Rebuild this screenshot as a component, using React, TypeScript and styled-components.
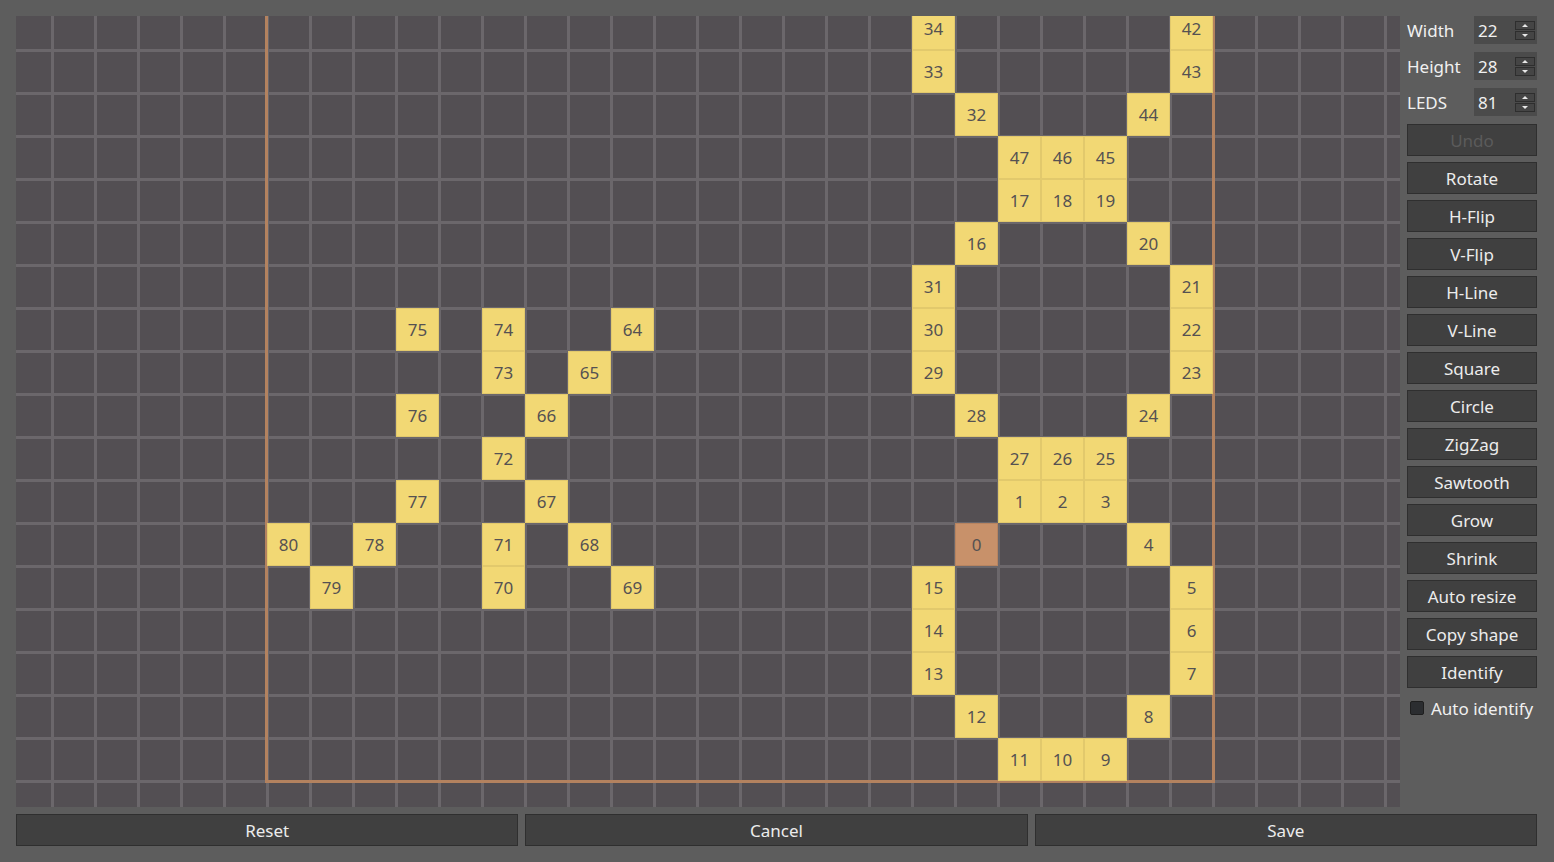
import styled, { createGlobalStyle } from 'styled-components'

const GlobalStyle = createGlobalStyle`
  html, body {
    margin: 0;
    padding: 0;
    background: #5d5d5d;
    font-family: "Noto Sans", "DejaVu Sans", sans-serif;
  }
  * {
    box-sizing: border-box;
  }
`

const CELL = 43
const COLS = 22
const ROWS = 28
const HIDDEN_ROWS = 10

// [led index, column, visible row]
const leds: [number, number, number][] = [
  [34, 15, 0], [42, 21, 0],
  [33, 15, 1], [43, 21, 1],
  [32, 16, 2], [44, 20, 2],
  [47, 17, 3], [46, 18, 3], [45, 19, 3],
  [17, 17, 4], [18, 18, 4], [19, 19, 4],
  [16, 16, 5], [20, 20, 5],
  [31, 15, 6], [21, 21, 6],
  [75, 3, 7], [74, 5, 7], [64, 8, 7], [30, 15, 7], [22, 21, 7],
  [73, 5, 8], [65, 7, 8], [29, 15, 8], [23, 21, 8],
  [76, 3, 9], [66, 6, 9], [28, 16, 9], [24, 20, 9],
  [72, 5, 10], [27, 17, 10], [26, 18, 10], [25, 19, 10],
  [77, 3, 11], [67, 6, 11], [1, 17, 11], [2, 18, 11], [3, 19, 11],
  [80, 0, 12], [78, 2, 12], [71, 5, 12], [68, 7, 12], [0, 16, 12], [4, 20, 12],
  [79, 1, 13], [70, 5, 13], [69, 8, 13], [15, 15, 13], [5, 21, 13],
  [14, 15, 14], [6, 21, 14],
  [13, 15, 15], [7, 21, 15],
  [12, 16, 16], [8, 20, 16],
  [11, 17, 17], [10, 18, 17], [9, 19, 17]
]

const tools = [
  'Rotate', 'H-Flip', 'V-Flip', 'H-Line', 'V-Line', 'Square', 'Circle',
  'ZigZag', 'Sawtooth', 'Grow', 'Shrink', 'Auto resize', 'Copy shape', 'Identify'
]

const Page = styled.div`
  width: 1554px;
  height: 862px;
  padding: 16px 17px 16px 16px;
  display: flex;
  flex-direction: column;
  gap: 7px;
`

const Main = styled.div`
  display: flex;
  gap: 7px;
  height: 791px;
`

const Canvas = styled.div`
  width: 1384px;
  height: 791px;
  overflow: hidden;
  background-color: #534f53;
  background-image:
    linear-gradient(to right, transparent 20px, #6b676b 20px, #6b676b 23px, transparent 23px),
    linear-gradient(to bottom, transparent 20px, #6b676b 20px, #6b676b 23px, transparent 23px);
  background-size: ${CELL}px ${CELL}px;
  background-position: 15px 0, 0 13px;
`

const Board = styled.div`
  position: relative;
  margin-left: 251px;
  margin-top: ${-9 - HIDDEN_ROWS * CELL}px;
  width: ${COLS * CELL}px;
  height: ${ROWS * CELL}px;
  display: grid;
  grid-template-columns: repeat(${COLS}, ${CELL}px);
  grid-template-rows: repeat(${ROWS}, ${CELL}px);

  &::before {
    content: '';
    position: absolute;
    left: -2px;
    top: -2px;
    right: -2px;
    bottom: -2px;
    border: 3px solid #b3825f;
  }
`

const Led = styled.div<{ $col: number; $row: number; $first: boolean }>`
  position: relative;
  grid-column: ${p => p.$col + 1};
  grid-row: ${p => p.$row + 1};
  background: ${p => (p.$first ? '#c8916a' : '#f2d874')};
  box-shadow: inset 0 0 0 1px ${p => (p.$first ? '#b88460' : '#e2c96c')};
  color: #555152;
  font-size: 17px;
  display: flex;
  align-items: center;
  justify-content: center;
`

const Panel = styled.div`
  width: 130px;
  display: flex;
  flex-direction: column;
`

const FieldRow = styled.div`
  display: flex;
  align-items: center;
  justify-content: space-between;
  height: 28px;
  margin-bottom: 8px;
  color: #f0f0f0;
  font-size: 17px;
`

const SpinBox = styled.div`
  width: 63px;
  height: 28px;
  background: #4b4b4b;
  display: flex;
  align-items: center;
  justify-content: space-between;
  padding: 0 2px 0 4px;
  color: #f0f0f0;
  font-size: 17px;
`

const SpinButtons = styled.div`
  display: flex;
  flex-direction: column;
  gap: 1px;
`

const SpinButton = styled.div`
  width: 20px;
  height: 9px;
  background: #454545;
  border: 1px solid #2e2e2e;
  display: flex;
  align-items: center;
  justify-content: center;
`

const Arrow = styled.div<{ $up: boolean }>`
  width: 0;
  height: 0;
  border-left: 3px solid transparent;
  border-right: 3px solid transparent;
  ${p => (p.$up ? 'border-bottom: 3px solid #e8e8e8;' : 'border-top: 3px solid #e8e8e8;')}
`

const ButtonList = styled.div`
  display: flex;
  flex-direction: column;
  gap: 6px;
`

const Button = styled.button`
  height: 32px;
  width: 100%;
  background: #404040;
  border: 1px solid #2f2f2f;
  border-radius: 0;
  color: #ececec;
  font-family: "Noto Sans", "DejaVu Sans", sans-serif;
  font-size: 17px;
  padding: 0;

  &:disabled {
    color: #5b5b5b;
  }
`

const CheckRow = styled.label`
  display: flex;
  align-items: center;
  gap: 7px;
  margin-top: 6px;
  height: 28px;
  padding-left: 3px;
  color: #f0f0f0;
  font-size: 17px;
`

const CheckBox = styled.span`
  width: 14px;
  height: 14px;
  border-radius: 2px;
  background: #2b2d30;
  border: 1px solid #1e1e1e;
`

const BottomBar = styled.div`
  display: flex;
  gap: 7px;
`

const BottomButton = styled(Button)`
  flex: 1;
`

function Spin ({ label, value }: { label: string; value: number }) {
  return (
    <FieldRow>
      {label}
      <SpinBox>
        {value}
        <SpinButtons>
          <SpinButton><Arrow $up /></SpinButton>
          <SpinButton><Arrow $up={false} /></SpinButton>
        </SpinButtons>
      </SpinBox>
    </FieldRow>
  )
}

export default function App () {
  return (
    <>
      <GlobalStyle />
      <Page>
        <Main>
          <Canvas>
            <Board>
              {leds.map(([n, col, row]) => (
                <Led key={n} $col={col} $row={row + HIDDEN_ROWS} $first={n === 0}>
                  {n}
                </Led>
              ))}
            </Board>
          </Canvas>
          <Panel>
            <Spin label='Width' value={22} />
            <Spin label='Height' value={28} />
            <Spin label='LEDS' value={81} />
            <ButtonList>
              <Button disabled>Undo</Button>
              {tools.map(t => (
                <Button key={t}>{t}</Button>
              ))}
            </ButtonList>
            <CheckRow>
              <CheckBox />
              Auto identify
            </CheckRow>
          </Panel>
        </Main>
        <BottomBar>
          <BottomButton>Reset</BottomButton>
          <BottomButton>Cancel</BottomButton>
          <BottomButton>Save</BottomButton>
        </BottomBar>
      </Page>
    </>
  )
}
